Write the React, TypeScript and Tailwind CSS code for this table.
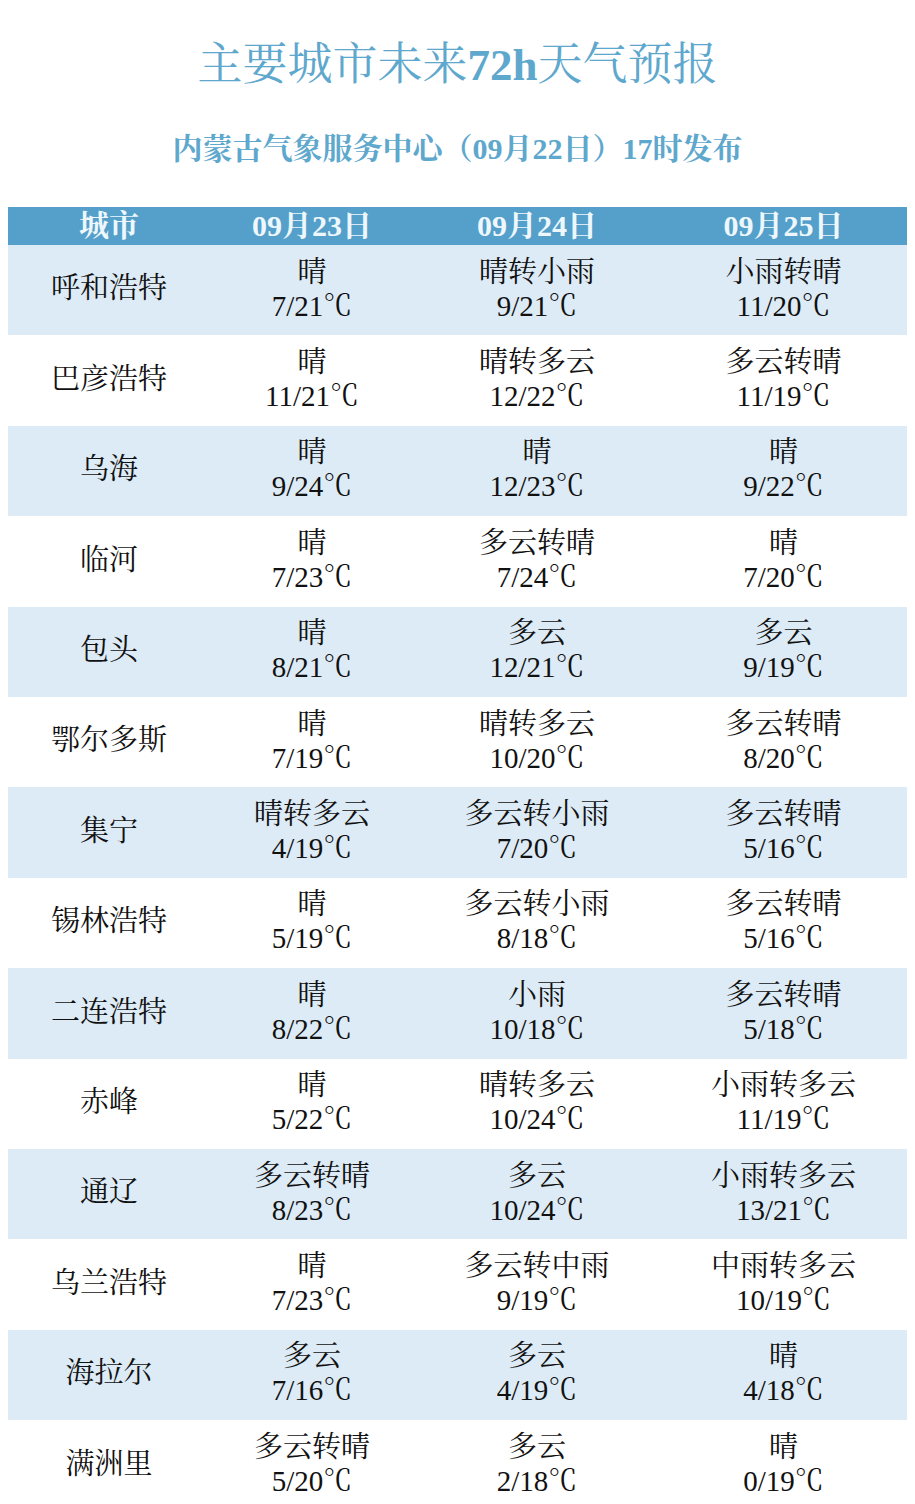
const rows: [string, string, string, string, string, string, string][] = [
  ["呼和浩特", "晴", "7/21℃", "晴转小雨", "9/21℃", "小雨转晴", "11/20℃"],
  ["巴彦浩特", "晴", "11/21℃", "晴转多云", "12/22℃", "多云转晴", "11/19℃"],
  ["乌海", "晴", "9/24℃", "晴", "12/23℃", "晴", "9/22℃"],
  ["临河", "晴", "7/23℃", "多云转晴", "7/24℃", "晴", "7/20℃"],
  ["包头", "晴", "8/21℃", "多云", "12/21℃", "多云", "9/19℃"],
  ["鄂尔多斯", "晴", "7/19℃", "晴转多云", "10/20℃", "多云转晴", "8/20℃"],
  ["集宁", "晴转多云", "4/19℃", "多云转小雨", "7/20℃", "多云转晴", "5/16℃"],
  ["锡林浩特", "晴", "5/19℃", "多云转小雨", "8/18℃", "多云转晴", "5/16℃"],
  ["二连浩特", "晴", "8/22℃", "小雨", "10/18℃", "多云转晴", "5/18℃"],
  ["赤峰", "晴", "5/22℃", "晴转多云", "10/24℃", "小雨转多云", "11/19℃"],
  ["通辽", "多云转晴", "8/23℃", "多云", "10/24℃", "小雨转多云", "13/21℃"],
  ["乌兰浩特", "晴", "7/23℃", "多云转中雨", "9/19℃", "中雨转多云", "10/19℃"],
  ["海拉尔", "多云", "7/16℃", "多云", "4/19℃", "晴", "4/18℃"],
  ["满洲里", "多云转晴", "5/20℃", "多云", "2/18℃", "晴", "0/19℃"],
];

const font =
  "font-['Liberation_Serif','Noto_Serif_CJK_SC','Noto_Sans_CJK_SC',serif]";

const Cell = ({ weather, temp }: { weather: string; temp: string }) => (
  <div className="flex flex-col items-center justify-center text-[29px] leading-[34px] pb-[3px]">
    <span>{weather}</span>
    <span>{temp}</span>
  </div>
);

const App = () => {
  return (
    <div className={`w-[915px] h-[1504px] overflow-hidden bg-white ${font}`}>
      <h1 className="pt-[40px] text-center text-[45px] leading-[50px] text-[#5ea7cd]">
        主要城市未来<span className="font-bold">72h</span>天气预报
      </h1>
      <p className="mt-[41px] text-center text-[30px] leading-[36px] font-bold text-[#5ea7cd]">
        内蒙古气象服务中心（09月22日）17时发布
      </p>

      <div className="mx-[8px] mt-[40px] w-[899px]">
        <div className="grid grid-cols-[202px_204px_246px_247px] h-[38px] bg-[#54a0ca] text-[#eef7fc] font-bold text-[30px] leading-[38px]">
          <div className="text-center">城市</div>
          <div className="text-center">09月23日</div>
          <div className="text-center">09月24日</div>
          <div className="text-center">09月25日</div>
        </div>

        {rows.map((r, i) => (
          <div
            key={r[0]}
            className={`grid grid-cols-[202px_204px_246px_247px] h-[90.4px] text-[#111] ${
              i % 2 === 0 ? "bg-[#ddebf6]" : "bg-white"
            }`}
          >
            <div className="flex items-center justify-center text-[29px] pb-[2px]">
              {r[0]}
            </div>
            <Cell weather={r[1]} temp={r[2]} />
            <Cell weather={r[3]} temp={r[4]} />
            <Cell weather={r[5]} temp={r[6]} />
          </div>
        ))}
      </div>
    </div>
  );
};

export default App;
